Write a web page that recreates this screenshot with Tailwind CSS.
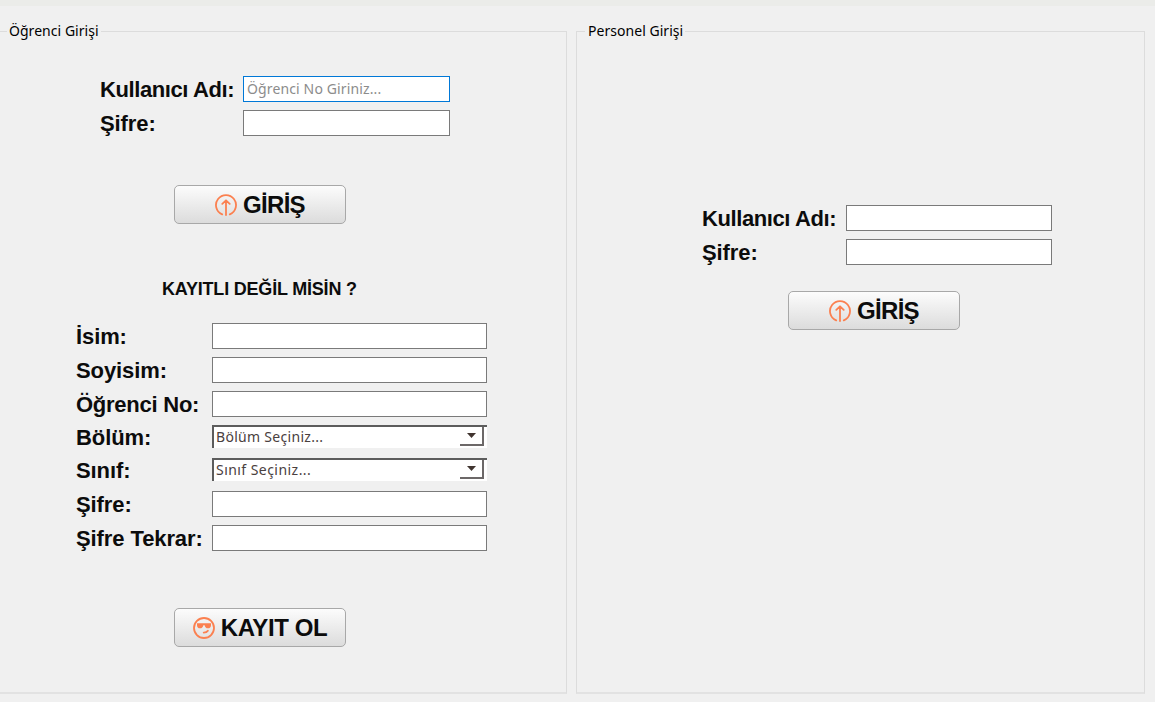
<!DOCTYPE html>
<html lang="tr"><head><meta charset="utf-8"><title>Giriş</title>
<script src="https://cdn.jsdelivr.net/npm/@tailwindcss/browser@4"></script></head>
<body class="h-[702px] w-[1155px] overflow-hidden bg-[#f0f0f0] font-['Liberation_Sans',sans-serif] text-[#0c0c0c]">
<svg class="hidden"><defs>
<symbol id="up" viewBox="0 0 22 22"><g fill="none" stroke="#fb8050" stroke-width="1.8" stroke-linecap="round" stroke-linejoin="round"><path d="M7.200 20.300A10 10 0 1 1 14.800 20.300M11 21V6.500M7.300 9.900 11 6.300l3.700 3.600"/></g></symbol>
<symbol id="cool" viewBox="0 0 22 22"><circle cx="11" cy="11" r="10" fill="none" stroke="#fb8050" stroke-width="1.8"/><path fill="#fb8050" d="M4 6.300h14v1.900c0 2-1.200 3.100-3 3.100-1.900 0-3-1.200-3.400-3.100h-1.200c-.4 1.900-1.500 3.100-3.400 3.100-1.800 0-3-1.100-3-3.100z"/><path d="M10.700 15.600c2 0 3.400-.6 4.200-1.800" fill="none" stroke="#fb8050" stroke-width="1.800" stroke-linecap="round"/></symbol>
</defs></svg>
<div class="h-1.5 bg-[#ebece9]"></div>
<main class="flex gap-[9px]">
<fieldset class="-ml-px mt-[14px] h-[674px] w-[568px] shrink-0 border border-b-2 border-[#dcdcdc] border-b-[#e2e2e2]">
<legend class="ml-[7px] h-[22px] px-[2px] font-['Noto_Sans',sans-serif] text-sm leading-[22px] tracking-[0.04px] whitespace-nowrap text-black">Öğrenci Girişi</legend>
<div class="mt-[34px] ml-[100px] grid grid-cols-[143px_207px] gap-y-2 text-[22px] leading-[28px] font-bold whitespace-nowrap">
<label class="h-[26px] tracking-[-0.4px]">Kullanıcı Adı:</label><div class="flex h-[26px] bg-[#0078d7] p-px"><input class="w-full bg-white px-[3px] font-['Noto_Sans',sans-serif] text-sm font-normal tracking-[0.13px] placeholder:text-[#8c8c8c]" placeholder="Öğrenci No Giriniz..."></div>
<label class="h-[26px] tracking-[-0.1px]">Şifre:</label><input class="h-[26px] border border-[#7a7a7a] bg-white">
</div>
<button class="mt-[49px] ml-[174px] flex h-[39px] w-[172px] items-center justify-center gap-[6px] rounded-[5px] border border-[#a8a8a8] bg-linear-to-b from-[#fcfcfc] to-[#dcdcdc] pt-px text-2xl font-bold tracking-[-0.7px]"><svg class="-mt-px size-[22px]"><use href="#up"/></svg><span>GİRİŞ</span></button>
<h2 class="mt-[53px] ml-[162px] h-[24px] text-lg leading-6 font-bold tracking-[-0.2px]">KAYITLI DEĞİL MİSİN ?</h2>
<div class="mt-[22px] ml-[76px] grid grid-cols-[136px_275px] gap-y-2 text-[22px] leading-[28px] font-bold tracking-[-0.1px] whitespace-nowrap">
<label class="h-[26px]">İsim:</label><input class="h-[26px] border border-[#7a7a7a] bg-white">
<label class="h-[26px]">Soyisim:</label><input class="h-[26px] border border-[#7a7a7a] bg-white">
<label class="h-[26px] tracking-[-0.25px]">Öğrenci No:</label><input class="h-[26px] border border-[#7a7a7a] bg-white">
<label class="h-[25px] leading-[25px]">Bölüm:</label><div class="flex h-[23px] w-[275px] justify-between border-t-2 border-l-2 border-[#5c5c5c] bg-white pl-[2px] font-['Noto_Sans',sans-serif] text-sm leading-[20px] font-normal tracking-[0.3px] text-[#4a4040]"><span>Bölüm Seçiniz...</span><i class="mr-[3px] flex h-[19px] w-6 items-center justify-center border-r-2 border-b-2 border-[#6c6868]"><svg class="h-[5px] w-[9px]" viewBox="0 0 9 5"><path fill="#40342f" d="M0 0h9L4.500 5z"/></svg></i></div>
<label class="h-[25px] leading-[25px]">Sınıf:</label><div class="flex h-[23px] w-[275px] justify-between border-t-2 border-l-2 border-[#5c5c5c] bg-white pl-[2px] font-['Noto_Sans',sans-serif] text-sm leading-[20px] font-normal tracking-[0.45px] text-[#4a4040]"><span>Sınıf Seçiniz...</span><i class="mr-[3px] flex h-[19px] w-6 items-center justify-center border-r-2 border-b-2 border-[#6c6868]"><svg class="h-[5px] w-[9px]" viewBox="0 0 9 5"><path fill="#40342f" d="M0 0h9L4.500 5z"/></svg></i></div>
<label class="h-[26px]">Şifre:</label><input class="h-[26px] border border-[#7a7a7a] bg-white">
<label class="h-[26px]">Şifre Tekrar:</label><input class="h-[26px] border border-[#7a7a7a] bg-white">
</div>
<button class="mt-[57px] ml-[174px] flex h-[39px] w-[172px] items-center justify-center gap-[6px] rounded-[5px] border border-[#a8a8a8] bg-linear-to-b from-[#fcfcfc] to-[#dcdcdc] pt-px text-2xl font-bold tracking-[-0.4px]"><svg class="-mt-px size-[22px]"><use href="#cool"/></svg><span>KAYIT OL</span></button>
</fieldset>
<fieldset class="mt-[14px] h-[674px] w-[569px] shrink-0 border border-b-2 border-[#dcdcdc] border-b-[#e2e2e2]">
<legend class="ml-[8px] h-[22px] pr-[2px] pl-[3px] font-['Noto_Sans',sans-serif] text-sm leading-[22px] tracking-[0.04px] whitespace-nowrap text-black">Personel Girişi</legend>
<div class="mt-[163px] ml-[125px] grid grid-cols-[144px_206px] gap-y-2 text-[22px] leading-[28px] font-bold whitespace-nowrap">
<label class="h-[26px] tracking-[-0.4px]">Kullanıcı Adı:</label><input class="h-[26px] border border-[#7a7a7a] bg-white">
<label class="h-[26px] tracking-[-0.1px]">Şifre:</label><input class="h-[26px] border border-[#7a7a7a] bg-white">
</div>
<button class="mt-[26px] ml-[211px] flex h-[39px] w-[172px] items-center justify-center gap-[6px] rounded-[5px] border border-[#a8a8a8] bg-linear-to-b from-[#fcfcfc] to-[#dcdcdc] pt-px text-2xl font-bold tracking-[-0.7px]"><svg class="-mt-px size-[22px]"><use href="#up"/></svg><span>GİRİŞ</span></button>
</fieldset>
</main>
</body></html>
